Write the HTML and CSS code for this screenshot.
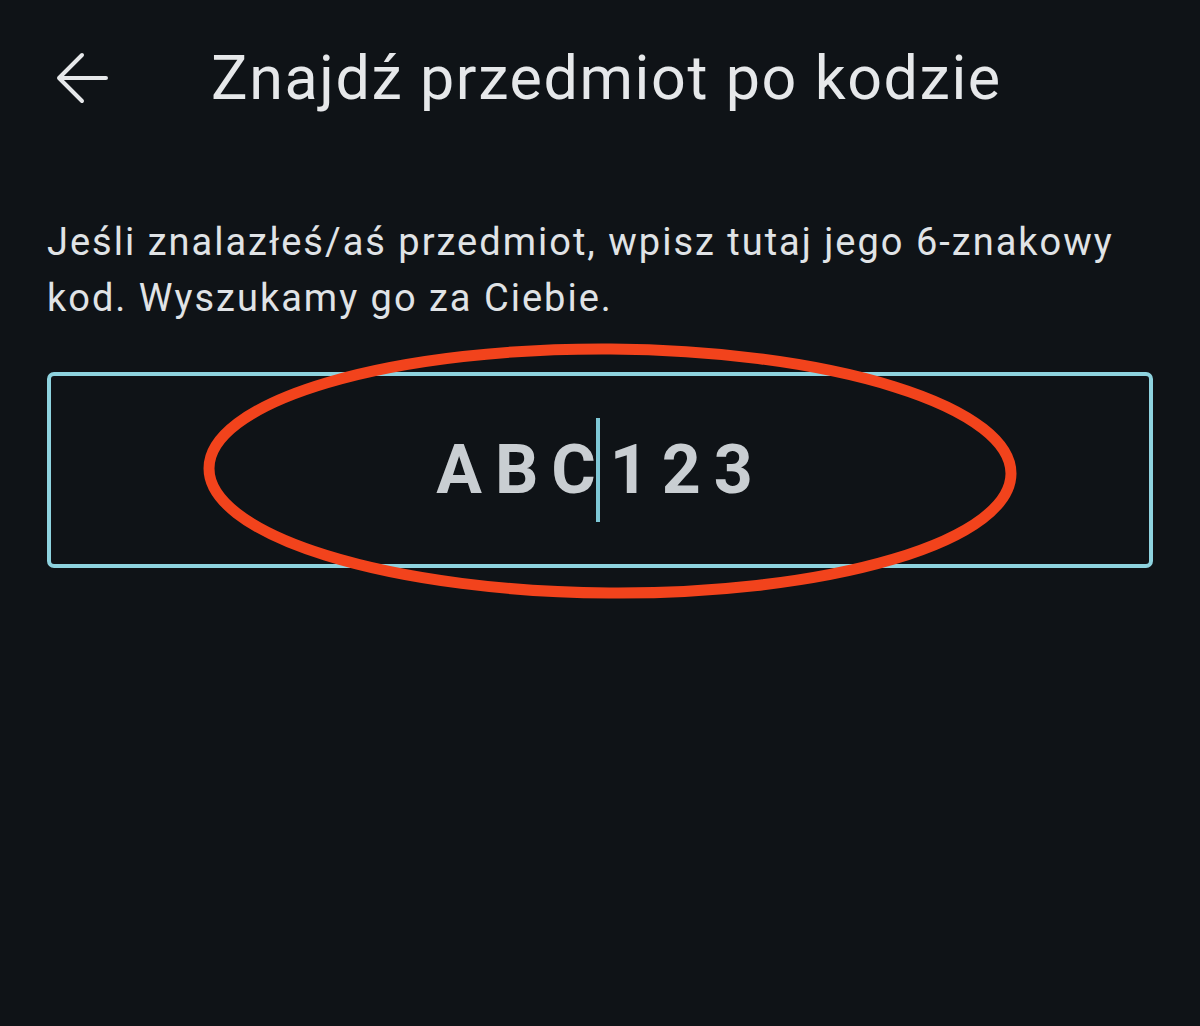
FILE: index.html
```html
<!DOCTYPE html>
<html lang="pl">
<head>
    <meta charset="UTF-8">
    <meta name="viewport" content="width=device-width, initial-scale=1.0">
    <title>Znajdź przedmiot po kodzie</title>
    <link rel="stylesheet" href="styles.css">
</head>
<body>
    <div class="screen">
        <header class="top-bar">
            <button class="back" aria-label="Wstecz">
                <svg width="56" height="56" viewBox="0 0 56 56">
                    <path d="M52 28H5M28 5L5 28l23 23" fill="none" stroke="#e6e8ea" stroke-width="4" stroke-linecap="round" stroke-linejoin="round"/>
                </svg>
            </button>
            <h1>Znajdź przedmiot po kodzie</h1>
        </header>

        <p class="hint">Jeśli znalazłeś/aś przedmiot, wpisz tutaj jego 6-znakowy kod. Wyszukamy go za Ciebie.</p>

        <div class="code-field">
            <div class="code-value"><span>ABC</span><i class="caret"></i><span>123</span></div>
            <!-- hand-drawn highlight around the code -->
            <svg class="mark" width="830" height="270" viewBox="0 0 830 270">
                <ellipse cx="413" cy="129" rx="401" ry="122" fill="none" stroke="#f2431c" stroke-width="11" transform="rotate(0.4 413 129)"/>
            </svg>
        </div>
    </div>
</body>
</html>
```

FILE: styles.css
```css
html, body {
    margin: 0;
    background-color: #0f1317;
}
body {
    font-family: Roboto, "Noto Sans", Arial, sans-serif;
    color: #e3e5e8;
}
.screen {
    width: 1200px;
    height: 1026px;
    overflow: hidden;
    box-sizing: border-box;
    padding: 0 47px;
}
.top-bar {
    display: flex;
    align-items: center;
    height: 156px;
}
.back {
    background: none;
    border: none;
    padding: 0;
    margin-left: 7px;
    width: 56px;
    height: 56px;
    cursor: pointer;
}
.back svg {
    display: block;
}
h1 {
    margin: 0 0 0 101px;
    font-weight: 400;
    font-size: 61px;
    letter-spacing: 1.6px;
    color: #e6e8ea;
}
.hint {
    margin: 58px 0 0;
    font-size: 38px;
    line-height: 56px;
    letter-spacing: 2px;
    color: #e0e3e6;
}
.code-field {
    position: relative;
    margin-top: 46px;
    height: 188px;
    border: 4px solid #8ed3df;
    border-radius: 7px;
    display: flex;
    align-items: center;
    justify-content: center;
}
.code-value {
    display: flex;
    align-items: center;
    font-size: 68px;
    font-weight: 700;
    letter-spacing: 13px;
    color: #c9ced2;
    margin-left: 2px;
}
.caret {
    width: 4px;
    height: 104px;
    background-color: #7ec7d6;
    margin: 0 10px 0 -13px;
}
.mark {
    position: absolute;
    left: 146px;
    top: -34px;
    pointer-events: none;
}
```
